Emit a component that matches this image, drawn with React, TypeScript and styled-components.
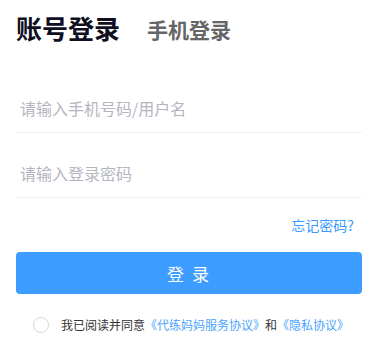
import { useState } from "react";
import { styled, createGlobalStyle } from "styled-components";

const GlobalStyle = createGlobalStyle`
  body {
    margin: 0;
    background: #ffffff;
    font-family: "Noto Sans CJK SC", "Noto Sans", sans-serif;
  }
  * {
    box-sizing: border-box;
  }
`;

const Page = styled.div`
  width: 377px;
  padding: 14px 15px 0 16px;
`;

const Tabs = styled.div`
  display: flex;
  align-items: flex-end;
`;

const Tab = styled.div<{ $active?: boolean }>`
  font-size: ${(p) => (p.$active ? "26px" : "21px")};
  line-height: ${(p) => (p.$active ? "28px" : "26px")};
  font-weight: 700;
  color: ${(p) => (p.$active ? "#0f0f1f" : "#666666")};
  margin-left: ${(p) => (p.$active ? "0" : "27px")};
  cursor: pointer;
`;

const Field = styled.div<{ $first?: boolean }>`
  display: flex;
  align-items: center;
  height: 45px;
  padding-bottom: 4px;
  margin-top: ${(p) => (p.$first ? "46px" : "20px")};
  border-bottom: 1px solid #f1f1f3;
`;

const Input = styled.input`
  flex: 1;
  border: none;
  outline: none;
  padding: 0 0 0 4px;
  font-family: inherit;
  font-size: 16px;
  color: #333333;
  background: transparent;
  &::placeholder {
    color: #b4b6bf;
  }
`;

const ForgotRow = styled.div`
  display: flex;
  justify-content: flex-end;
  margin-top: 17px;
  padding-right: 8px;
`;

const Link = styled.a`
  color: #3a9bfd;
  font-size: 14px;
  line-height: 20px;
  text-decoration: none;
  cursor: pointer;
`;

const SubmitButton = styled.button`
  display: block;
  width: 100%;
  height: 42px;
  margin-top: 17px;
  border: none;
  border-radius: 4px;
  background: #3c9cff;
  color: #ffffff;
  font-family: inherit;
  font-size: 17px;
  letter-spacing: 2px;
  cursor: pointer;
`;

const Agreement = styled.div`
  display: flex;
  align-items: center;
  margin-top: 23px;
  padding-left: 17px;
  font-size: 12px;
  line-height: 16px;
  color: #333333;
`;

const Check = styled.span<{ $checked: boolean }>`
  width: 16px;
  height: 16px;
  border-radius: 50%;
  border: 1px solid #d9d9d9;
  background: ${(p) => (p.$checked ? "#3c9cff" : "#ffffff")};
  margin-right: 12px;
  flex-shrink: 0;
  cursor: pointer;
`;

const Doc = styled.span`
  color: #4aa3fd;
`;

export default function App() {
  const [tab, setTab] = useState(0);
  const [agreed, setAgreed] = useState(false);

  return (
    <Page>
      <GlobalStyle />
      <Tabs>
        <Tab $active={tab === 0} onClick={() => setTab(0)}>
          账号登录
        </Tab>
        <Tab $active={tab === 1} onClick={() => setTab(1)}>
          手机登录
        </Tab>
      </Tabs>
      <Field $first>
        <Input placeholder="请输入手机号码/用户名" />
      </Field>
      <Field>
        <Input type="password" placeholder="请输入登录密码" />
      </Field>
      <ForgotRow>
        <Link>忘记密码?</Link>
      </ForgotRow>
      <SubmitButton>登 录</SubmitButton>
      <Agreement>
        <Check $checked={agreed} onClick={() => setAgreed(!agreed)} />
        我已阅读并同意<Doc>《代练妈妈服务协议》</Doc>和<Doc>《隐私协议》</Doc>
      </Agreement>
    </Page>
  );
}
